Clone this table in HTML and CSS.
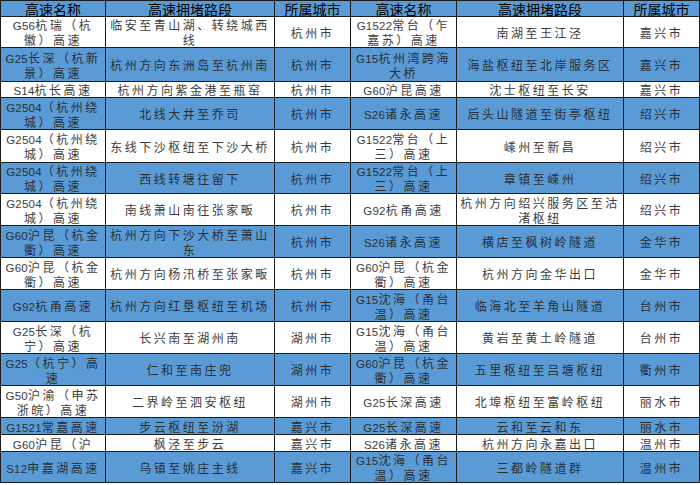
FILE: index.html
```html
<!DOCTYPE html>
<html lang="zh-CN">
<head>
<meta charset="utf-8">
<title>高速拥堵路段</title>
<link rel="stylesheet" href="styles.css">
</head>
<body>
<table class="jam">
  <colgroup>
    <col class="c-name"><col class="c-road"><col class="c-city">
    <col class="c-name2"><col class="c-road2"><col class="c-city">
  </colgroup>
  <thead>
    <tr class="head">
      <th>高速名称</th><th>高速拥堵路段</th><th>所属城市</th>
      <th>高速名称</th><th>高速拥堵路段</th><th>所属城市</th>
    </tr>
  </thead>
  <tbody>
    <tr class="h31">
      <td><span class="code">G56</span>杭瑞（杭<br>徽）高速</td><td>临安至青山湖、转绕城西<br>线</td><td>杭州市</td>
      <td><span class="code">G1522</span>常台（乍<br>嘉苏）高速</td><td>南湖至王江泾</td><td>嘉兴市</td>
    </tr>
    <tr class="blue h34">
      <td><span class="code">G25</span>长深（杭新<br>景）高速</td><td>杭州方向东洲岛至杭州南</td><td>杭州市</td>
      <td><span class="code">G15</span>杭州湾跨海<br>大桥</td><td>海盐枢纽至北岸服务区</td><td>嘉兴市</td>
    </tr>
    <tr class="h15">
      <td><span class="code">S14</span>杭长高速</td><td>杭州方向紫金港至瓶窑</td><td>杭州市</td>
      <td><span class="code">G60</span>沪昆高速</td><td>沈士枢纽至长安</td><td>嘉兴市</td>
    </tr>
    <tr class="blue h32">
      <td><span class="code">G2504</span>（杭州绕<br>城）高速</td><td>北线大井至乔司</td><td>杭州市</td>
      <td><span class="code">S26</span>诸永高速</td><td>后头山隧道至街亭枢纽</td><td>绍兴市</td>
    </tr>
    <tr class="h33">
      <td><span class="code">G2504</span>（杭州绕<br>城）高速</td><td>东线下沙枢纽至下沙大桥</td><td>杭州市</td>
      <td><span class="code">G1522</span>常台（上<br>三）高速</td><td>嵊州至新昌</td><td>绍兴市</td>
    </tr>
    <tr class="blue h31">
      <td><span class="code">G2504</span>（杭州绕<br>城）高速</td><td>西线转塘往留下</td><td>杭州市</td>
      <td><span class="code">G1522</span>常台（上<br>三）高速</td><td>章镇至嵊州</td><td>绍兴市</td>
    </tr>
    <tr class="h32">
      <td><span class="code">G2504</span>（杭州绕<br>城）高速</td><td>南线萧山南往张家畈</td><td>杭州市</td>
      <td><span class="code">G92</span>杭甬高速</td><td>杭州方向绍兴服务区至沽<br>渚枢纽</td><td>绍兴市</td>
    </tr>
    <tr class="blue h32">
      <td><span class="code">G60</span>沪昆（杭金<br>衢）高速</td><td>杭州方向下沙大桥至萧山<br>东</td><td>杭州市</td>
      <td><span class="code">S26</span>诸永高速</td><td>横店至枫树岭隧道</td><td>金华市</td>
    </tr>
    <tr class="h32">
      <td><span class="code">G60</span>沪昆（杭金<br>衢）高速</td><td>杭州方向杨汛桥至张家畈</td><td>杭州市</td>
      <td><span class="code">G60</span>沪昆（杭金<br>衢）高速</td><td>杭州方向金华出口</td><td>金华市</td>
    </tr>
    <tr class="blue h32">
      <td><span class="code">G92</span>杭甬高速</td><td>杭州方向红垦枢纽至机场</td><td>杭州市</td>
      <td><span class="code">G15</span>沈海（甬台<br>温）高速</td><td>临海北至羊角山隧道</td><td>台州市</td>
    </tr>
    <tr class="h32">
      <td><span class="code">G25</span>长深（杭<br>宁）高速</td><td>长兴南至湖州南</td><td>湖州市</td>
      <td><span class="code">G15</span>沈海（甬台<br>温）高速</td><td>黄岩至黄土岭隧道</td><td>台州市</td>
    </tr>
    <tr class="blue h32">
      <td><span class="code">G25</span>（杭宁）高<br>速</td><td>仁和至南庄兜</td><td>湖州市</td>
      <td><span class="code">G60</span>沪昆（杭金<br>衢）高速</td><td>五里枢纽至吕塘枢纽</td><td>衢州市</td>
    </tr>
    <tr class="h32">
      <td><span class="code">G50</span>沪渝（申苏<br>浙皖）高速</td><td>二界岭至泗安枢纽</td><td>湖州市</td>
      <td><span class="code">G25</span>长深高速</td><td>北埠枢纽至富岭枢纽</td><td>丽水市</td>
    </tr>
    <tr class="blue h17">
      <td><span class="code">G1521</span>常嘉高速</td><td>步云枢纽至汾湖</td><td>嘉兴市</td>
      <td><span class="code">G25</span>长深高速</td><td>云和至云和东</td><td>丽水市</td>
    </tr>
    <tr class="h17">
      <td><span class="code">G60</span>沪昆（沪</td><td>枫泾至步云</td><td>嘉兴市</td>
      <td><span class="code">S26</span>诸永高速</td><td>杭州方向永嘉出口</td><td>温州市</td>
    </tr>
    <tr class="blue h31">
      <td><span class="code">S12</span>申嘉湖高速</td><td>乌镇至姚庄主线</td><td>嘉兴市</td>
      <td><span class="code">G15</span>沈海（甬台<br>温）高速</td><td>三都岭隧道群</td><td>温州市</td>
    </tr>
  </tbody>
</table>
</body>
</html>
```

FILE: styles.css
```css
html, body {
  margin: 0;
  padding: 0;
  background: #ffffff;
}

.jam {
  border-collapse: collapse;
  table-layout: fixed;
  width: 699px;
  font-family: "Noto Sans CJK SC", "Noto Sans", sans-serif;
}

.c-name { width: 105px; }
.c-road { width: 169px; }
.c-city { width: 76px; }
.c-name2 { width: 106px; }
.c-road2 { width: 167px; }

.jam th,
.jam td {
  border: 1px solid #1c1c1c;
  padding: 0;
  text-align: center;
  vertical-align: middle;
  white-space: nowrap;
}

.head th {
  background: #5b9bd5;
  color: #000000;
  font-size: 14px;
  font-weight: normal;
  line-height: 14px;
  height: 15px;
  padding-top: 1px;
  box-sizing: border-box;
}

.jam td {
  font-size: 12px;
  line-height: 15px;
  letter-spacing: 2.5px;
  color: #3c3c3c;
  overflow: hidden;
}

.jam .code {
  font-family: "Liberation Sans", sans-serif;
  font-size: 11.5px;
  letter-spacing: 0.2px;
  line-height: 0;
}

.blue td {
  background: #5b9bd5;
  color: #2a2f36;
}

.h15 td { height: 14px; }
.h17 td { height: 16px; }
.h31 td { height: 30px; }
.h32 td { height: 31px; }
.h33 td { height: 32px; }
.h34 td { height: 33px; }
```
